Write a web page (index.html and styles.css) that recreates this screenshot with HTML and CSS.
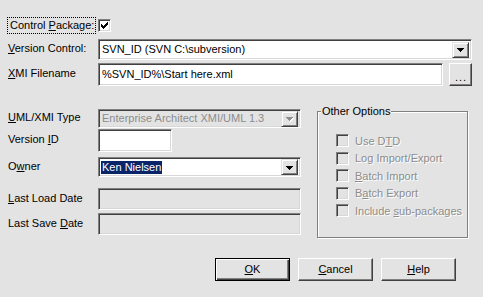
FILE: index.html
```html
<!DOCTYPE html>
<html lang="en">
<head>
    <meta charset="UTF-8">
    <title>Package Control Options</title>
    <link rel="stylesheet" href="styles.css">
</head>
<body>
    <div class="dialog">
        <div class="row row-check">
            <div class="label"><span class="focus">Control <u>P</u>ackage:</span></div>
            <span class="check">
                <svg width="11" height="11" viewBox="0 0 11 11" shape-rendering="crispEdges"><path d="M2 4h1v3h-1z M3 5h1v3h-1z M4 6h1v3h-1z M5 5h1v3h-1z M6 4h1v3h-1z M7 3h1v3h-1z M8 2h1v3h-1z" fill="#000"/></svg>
            </span>
        </div>

        <div class="row row-version">
            <div class="label"><u>V</u>ersion Control:</div>
            <div class="combo combo-wide">
                <span class="value">SVN_ID (SVN C:\subversion)</span>
                <span class="drop"><svg width="7" height="4" viewBox="0 0 7 4" shape-rendering="crispEdges"><path d="M0 0h7v1h-1v1h-1v1h-1v1h-1v-1h-1v-1h-1v-1h-1z" fill="#000"/></svg></span>
            </div>
        </div>

        <div class="row row-xmi">
            <div class="label"><u>X</u>MI Filename</div>
            <div class="edit edit-xmi"><span class="value">%SVN_ID%\Start here.xml</span></div>
            <button class="btn btn-browse">...</button>
        </div>

        <div class="middle">
            <div class="fields">
                <div class="row row-uml">
                    <div class="label"><u>U</u>ML/XMI Type</div>
                    <div class="combo combo-field disabled">
                        <span class="value">Enterprise Architect XMI/UML 1.3</span>
                        <span class="drop"><svg width="8" height="5" viewBox="0 0 8 5" shape-rendering="crispEdges"><path d="M1 1h7v1h-1v1h-1v1h-1v1h-1v-1h-1v-1h-1v-1h-1z" fill="#fff"/><path d="M0 0h7v1h-1v1h-1v1h-1v1h-1v-1h-1v-1h-1v-1h-1z" fill="#8c8c8c"/></svg></span>
                    </div>
                </div>
                <div class="row row-vid">
                    <div class="label">Version <u>I</u>D</div>
                    <div class="edit edit-short"></div>
                </div>
                <div class="row row-owner">
                    <div class="label">O<u>w</u>ner</div>
                    <div class="combo combo-field">
                        <span class="value"><span class="selected">Ken Nielsen</span></span>
                        <span class="drop"><svg width="7" height="4" viewBox="0 0 7 4" shape-rendering="crispEdges"><path d="M0 0h7v1h-1v1h-1v1h-1v1h-1v-1h-1v-1h-1v-1h-1z" fill="#000"/></svg></span>
                    </div>
                </div>
                <div class="row row-load">
                    <div class="label"><u>L</u>ast Load Date</div>
                    <div class="edit edit-field disabled"></div>
                </div>
                <div class="row row-save">
                    <div class="label">Last Save <u>D</u>ate</div>
                    <div class="edit edit-field disabled"></div>
                </div>
            </div>

            <div class="group">
                <span class="legend">Other Options</span>
                <div class="option"><span class="check off"></span><span>Use D<u>T</u>D</span></div>
                <div class="option"><span class="check off"></span><span>Log Import/Export</span></div>
                <div class="option"><span class="check off"></span><span><u>B</u>atch Import</span></div>
                <div class="option"><span class="check off"></span><span>B<u>a</u>tch Export</span></div>
                <div class="option"><span class="check off"></span><span>Include <u>s</u>ub-packages</span></div>
            </div>
        </div>

        <div class="buttons">
            <button class="btn btn-default"><u>O</u>K</button>
            <button class="btn"><u>C</u>ancel</button>
            <button class="btn"><u>H</u>elp</button>
        </div>
    </div>
</body>
</html>
```

FILE: styles.css
```css
html, body {
    margin: 0;
    padding: 0;
    background-color: #e3e3e3;
    overflow: hidden;
}

body {
    font-family: "Liberation Sans", Arial, sans-serif;
    font-size: 11px;
    color: #000;
}

u {
    text-decoration: underline;
    text-underline-offset: 1px;
}

.dialog {
    width: 483px;
    height: 297px;
    padding: 17px 0 0 8px;
    box-sizing: border-box;
}

.row {
    display: flex;
    align-items: center;
}

.label {
    width: 90px;
    flex-shrink: 0;
    line-height: 13px;
    margin-top: -2px;
}

.focus {
    display: inline-block;
    outline: 1px dotted #000;
    outline-offset: 0;
    padding: 1px 1px 1px 2px;
    line-height: 13px;
}

.row-check .label {
    margin-top: 0;
}

/* checkboxes */
.check {
    display: inline-block;
    width: 11px;
    height: 11px;
    border: 1px solid;
    border-color: #808080 #fff #fff #808080;
    box-shadow: inset 1px 1px #404040, inset -1px -1px #d8d8d8;
    background: #fff;
    flex-shrink: 0;
}

.check svg {
    display: block;
}

.check.off {
    background: #e3e3e3;
    margin-right: 6px;
}

.row-check {
    height: 16px;
}

/* sunken fields */
.combo, .edit {
    box-sizing: border-box;
    border: 1px solid;
    border-color: #808080 #fff #fff #808080;
    box-shadow: inset 1px 1px #404040, inset -1px -1px #d8d8d8;
    background: #fff;
    display: flex;
    align-items: center;
    padding: 0 2px 0 2px;
}

.combo.disabled, .edit.disabled {
    background: #e3e3e3;
}

.combo.disabled .value {
    color: #8c8c8c;
}

.value {
    flex: 1;
    padding-left: 1px;
    white-space: nowrap;
    overflow: hidden;
    line-height: 13px;
}

.selected {
    background: #0a246a;
    color: #fff;
    padding: 1px 1px 1px 1px;
    margin-left: -1px;
}

.drop {
    width: 13px;
    height: 13px;
    border: 1px solid;
    border-color: #e3e3e3 #404040 #404040 #e3e3e3;
    box-shadow: inset 1px 1px #fff, inset -1px -1px #808080;
    background: #e3e3e3;
    display: flex;
    align-items: center;
    justify-content: center;
    padding: 1px 1px 0 1px;
}

.drop svg {
    display: block;
}

.row-version {
    margin-top: 6px;
}

.combo-wide {
    width: 374px;
    height: 21px;
}

.row-xmi {
    margin-top: 3px;
}

.edit-xmi {
    width: 345px;
    height: 23px;
}

/* buttons */
.btn {
    font-family: inherit;
    font-size: 11px;
    color: #000;
    box-sizing: border-box;
    width: 75px;
    height: 23px;
    padding: 0;
    border: 1px solid;
    border-color: #fff #404040 #404040 #fff;
    box-shadow: inset -1px -1px #808080;
    background: #e3e3e3;
    border-radius: 0;
    line-height: 13px;
}

.btn-browse {
    width: 23px;
    height: 23px;
    margin-left: 6px;
    padding-top: 5px;
    letter-spacing: 1px;
    padding-left: 1px;
}

.btn-default {
    border: 1px solid #000;
    box-shadow: inset 1px 1px #fff, inset -1px -1px #404040, inset -2px -2px #808080;
}

/* middle section */
.middle {
    display: flex;
    margin-top: 23px;
    align-items: flex-start;
}

.fields {
    width: 293px;
}

.combo-field, .edit-field {
    width: 203px;
}

.row-uml .combo {
    height: 19px;
}

.row-vid {
    margin-top: 1px;
}

.edit-short {
    width: 74px;
    height: 23px;
}

.row-owner {
    margin-top: 5px;
}

.row-owner .combo {
    height: 20px;
}

.row-load {
    margin-top: 11px;
}

.row-save {
    margin-top: 3px;
}

.edit-field {
    height: 22px;
}

/* group box */
.group {
    position: relative;
    margin-left: 16px;
    margin-top: 2px;
    width: 151px;
    height: 127px;
    box-sizing: border-box;
    border: 1px solid #808080;
    box-shadow: inset 1px 1px #fff, 1px 1px 0 #fff;
    padding: 20px 0 0 18px;
}

.legend {
    position: absolute;
    top: -7px;
    left: 3px;
    padding: 0 1px 0 1px;
    background: #e3e3e3;
    line-height: 13px;
}

.option {
    display: flex;
    align-items: center;
    height: 17.5px;
    color: #8c8c8c;
    text-shadow: 1px 1px #fff;
    white-space: nowrap;
}

.buttons {
    display: flex;
    gap: 8px;
    margin-top: 20px;
    padding-left: 207px;
}
```
